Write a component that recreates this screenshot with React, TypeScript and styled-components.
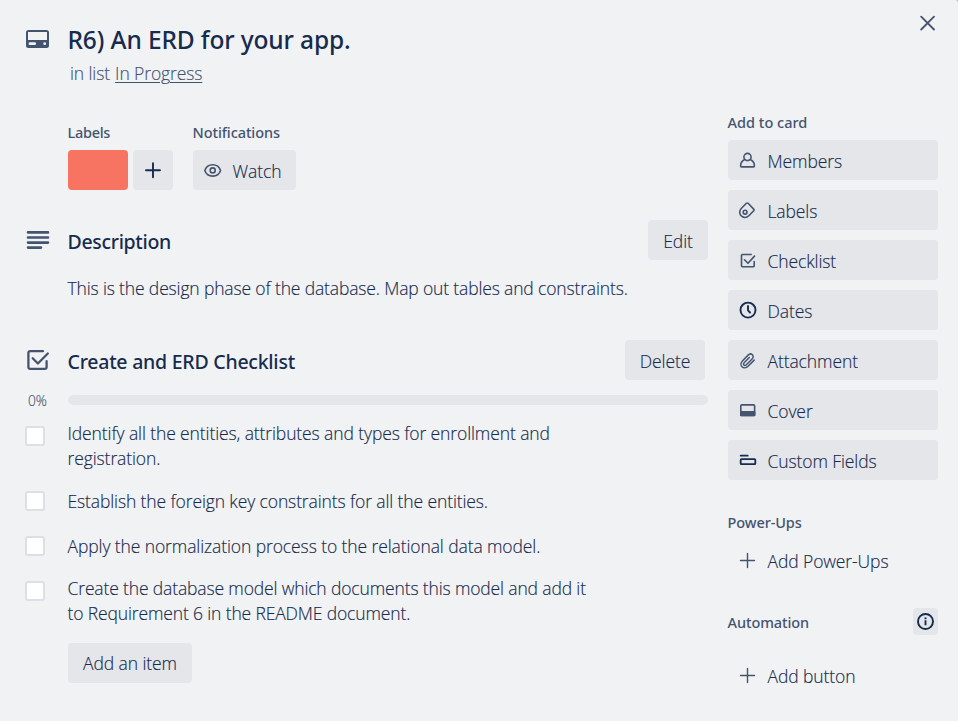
import React from "react";
import styled, { createGlobalStyle } from "styled-components";

const ink = "#172b4d";
const subtle = "#44546f";
const surface = "#f1f2f4";
const neutral = "#e4e6ea";

const GlobalStyle = createGlobalStyle`
  * { box-sizing: border-box; }
  body {
    margin: 0;
    background: #8d929b;
    color: ${ink};
    font: 300 17.5px/25px "Open Sans", "Noto Sans", sans-serif;
  }
  h2, h3, h4, p, ul { margin: 0; padding: 0; }
  svg { display: block; flex: none; fill: none; stroke: currentColor; }
`;

const Card = styled.main`
  width: 958px;
  height: 721px;
  overflow: hidden;
  background: ${surface};
  border-top-right-radius: 2px;
  -webkit-text-stroke: 0.15px;
`;

const Header = styled.header`
  display: flex;
  align-items: flex-start;
  height: 112px;
  padding: 0 22px 0 25px;
`;

const HeaderIcon = styled.div`
  width: 42.5px;
  padding-top: 29px;
  color: ${subtle};
`;

const HeaderText = styled.div`
  flex: 1;
  padding-top: 25px;
`;

const Title = styled.h2`
  font: 500 24.5px/30px "Noto Sans", sans-serif;
  letter-spacing: -0.13px;
  -webkit-text-stroke: 0;
`;

const ListLine = styled.p`
  padding: 6px 0 0 2.5px;
  color: ${subtle};
  letter-spacing: -0.11px;
`;

const ListLink = styled.a`
  margin-left: 0.7px;
  text-decoration: underline;
  text-underline-offset: 2px;
  text-decoration-thickness: 1px;
`;

const CloseButton = styled.button`
  padding: 15px 0 0;
  border: 0;
  background: none;
  color: ${subtle};
`;

const Columns = styled.div`
  display: flex;
  gap: 20px;
  padding: 0 20px 0 25px;
`;

const Main = styled.div`
  width: 683px;
`;

const Sidebar = styled.aside`
  width: 210px;
`;

const SmallHeading = styled.h4<{ $track?: number }>`
  font: 500 14.5px/20px "Noto Sans", sans-serif;
  letter-spacing: ${(p) => p.$track ?? -0.1}px;
  color: ${subtle};
  -webkit-text-stroke: 0;
  text-indent: -0.4px;
`;

const Details = styled.div`
  display: flex;
  gap: 20px;
  padding: 10px 0 0 43px;
`;

const DetailRow = styled.div`
  display: flex;
  gap: 5px;
  margin-top: 8px;
`;

const Swatch = styled.div`
  width: 60px;
  height: 40px;
  border-radius: 4px;
  background: #f87462;
`;

const Button = styled.button<{ $width?: number }>`
  display: flex;
  align-items: center;
  justify-content: center;
  width: ${(p) => (p.$width ? `${p.$width}px` : "auto")};
  height: 40px;
  padding: 0;
  border: 0;
  border-radius: 4px;
  background: ${neutral};
  color: ${ink};
  font: inherit;
  letter-spacing: -0.1px;
  -webkit-text-stroke: 0.15px;
`;

const WatchButton = styled(Button)`
  justify-content: flex-start;
  padding-left: 10px;
`;

const ButtonText = styled.span<{ $lift?: boolean }>`
  padding-top: ${(p) => (p.$lift ? 1 : 3)}px;
`;

const ButtonIcon = styled.span<{ $strong?: boolean }>`
  width: 29.5px;
  padding-top: 2px;
  color: ${(p) => (p.$strong ? ink : subtle)};
`;

const SectionHead = styled.div<{ $inset?: number }>`
  display: flex;
  align-items: flex-start;
  height: 40px;
  padding-right: ${(p) => p.$inset ?? 0}px;
`;

const SectionIcon = styled.div`
  width: 42.5px;
  padding-top: 8px;
  color: ${subtle};
`;

const SectionTitle = styled.h3<{ $track: number }>`
  flex: 1;
  padding-top: 2px;
  font: 500 19.5px/40px "Noto Sans", sans-serif;
  letter-spacing: ${(p) => p.$track}px;
  -webkit-text-stroke: 0;
`;

const Description = styled.section`
  margin-top: 30px;
`;

const DescriptionText = styled.p`
  padding: 16px 0 0 42.5px;
  letter-spacing: -0.15px;
`;

const Checklist = styled.section`
  margin-top: 39px;
`;

const Progress = styled.div`
  display: flex;
  align-items: center;
  height: 20px;
  margin-top: 10px;
`;

const Percent = styled.span`
  width: 43px;
  padding: 2px 0 0 3px;
  color: ${subtle};
  font-size: 13.75px;
  line-height: 20px;
`;

const ProgressTrack = styled.div`
  flex: 1;
  height: 10px;
  border-radius: 5px;
  background: ${neutral};
`;

const Items = styled.ul`
  margin-top: 11px;
  list-style: none;
`;

const Item = styled.li<{ $height: number }>`
  display: flex;
  align-items: flex-start;
  height: ${(p) => p.$height}px;
`;

const Checkbox = styled.span`
  width: 20px;
  height: 20px;
  margin: 5px 22.5px 0 0;
  border: 2px solid #dcdfe4;
  border-radius: 3px;
  background: #fff;
`;

const ItemText = styled.p<{ $single: boolean }>`
  padding-top: ${(p) => (p.$single ? 3 : 0)}px;
`;

const Line = styled.span<{ $track: number }>`
  display: block;
  white-space: nowrap;
  letter-spacing: ${(p) => p.$track}px;
`;

const AddItem = styled.div`
  padding-left: 43px;
`;

const ActionList = styled.div`
  display: flex;
  flex-direction: column;
  gap: 10px;
  margin: 8px 0 32px;
`;

const Action = styled(Button)<{ $plain?: boolean }>`
  width: 210px;
  justify-content: flex-start;
  padding-left: 10px;
  background: ${(p) => (p.$plain ? "transparent" : neutral)};
`;

const AutomationHead = styled.div`
  display: flex;
  align-items: center;
  justify-content: space-between;
  height: 27px;
  margin: -4px 0 20px;
`;

const InfoButton = styled(Button)`
  height: 27px;
`;

const icon = (w: number, h: number, body: React.ReactNode, sw = 1.6) => (
  <svg width={w} height={h} viewBox={`0 0 ${w} ${h}`} strokeWidth={sw} strokeLinecap="round" strokeLinejoin="round">
    {body}
  </svg>
);

const CardIcon = () =>
  icon(26, 20, <path fill="currentColor" stroke="none" fillRule="evenodd" d="M3.5 1h18A2.5 2.5 0 0 1 24 3.5v13a2.5 2.5 0 0 1-2.5 2.5h-18A2.5 2.5 0 0 1 1 16.500v-13A2.500 2.500 0 0 1 3.500 1ZM3 3v8h19V3ZM5 13.300a1.400 1.400 0 0 0 0 2.800h4.700a1.400 1.400 0 0 0 0-2.800ZM19.700 13.300a1.400 1.400 0 1 0 0 2.800a1.400 1.400 0 0 0 0-2.800Z" />);
const CloseIcon = () => icon(16, 16, <path d="M1.200 1.700l12.800 12.800M14 1.700l-12.800 12.800" />, 1.8);
const PlusIcon = () => icon(20, 20, <path d="M9.500 2.500v14M2.500 9.500h14" />, 1.4);
const AddLabelIcon = () => icon(20, 20, <path d="M10 3.300v14M3 10.300h14" />, 1.9);
const EyeIcon = () => icon(20, 20, <><path d="M1.800 9.400C3.200 5.400 6.200 3.700 9.700 3.700s6.500 1.700 7.900 5.700c-1.400 4-4.400 5.700-7.900 5.700s-6.500-1.700-7.900-5.700Z" /><circle cx="9.700" cy="9.400" r="2.500" /></>, 1.6);
const LinesIcon = () => icon(26, 24, <path d="M3 4.400h20M3 9.500h20M3 14.600h20M3 19.600h13" />, 2.6);
const CheckIcon = () => icon(26, 24, <path d="M18 3.200H5A1.600 1.600 0 0 0 3.400 4.800v14.400A1.600 1.600 0 0 0 5 20.800h15a1.600 1.600 0 0 0 1.600-1.600v-6M7.700 10.300l5.200 5.200L22.800 5.500" />, 2.3);
const MemberIcon = () => icon(20, 20, <><circle cx="9.500" cy="6" r="3.600" /><path d="M6.800 8.500C4.100 9.700 2.600 11.900 2.600 14.900c0 .7.400 1 1 1h11.800c.6 0 1-.3 1-1 0-3-1.500-5.200-4.200-6.400" /></>);
const TagIcon = () => icon(20, 20, <><path d="M8.400 2.300a1.200 1.200 0 0 1 1.700 0l5.600 5.800a1.200 1.200 0 0 1 0 1.700l-4.600 4.700c-2.200 2.200-5.200 2.500-7.500.7-2.400-2-2.500-5.400-.4-7.700Z" /><circle cx="7.100" cy="11.200" r="1.900" /></>);
const SmallCheckIcon = () => icon(20, 20, <path d="M13.200 3.500H4.500a1 1 0 0 0-1 1v10.300a1 1 0 0 0 1 1h10.700a1 1 0 0 0 1-1v-4.200M6.500 8.800l3.500 3.500 6.500-7.200" />);
const ClockIcon = () => icon(20, 20, <><circle cx="10" cy="9.100" r="7.500" /><path d="M10 5v4.300l2 2.200" /></>, 1.9);
const ClipIcon = () => icon(20, 20, <path d="M16.200 9.100L10 15.300c-1.900 1.800-4.500 1.900-6 .4s-1.300-4 .4-5.800l5.700-5.800c1.300-1.300 3.200-1.400 4.300-.3s1 2.900-.3 4.200l-5.800 5.800c-.8.800-1.800.8-2.400.2s-.5-1.500.2-2.200l5.200-5.300" />, 1.5);
const CoverIcon = () => icon(20, 20, <><rect x="2.800" y="3.900" width="13.800" height="10.500" rx="1" /><path d="M2.800 10.700h13.800v3.700H2.800Z" fill="currentColor" /></>);
const FieldsIcon = () => icon(20, 20, <><path d="M2.700 4.700h7" /><rect x="2.700" y="8.200" width="14.600" height="5" rx=".7" /></>, 1.8);
const InfoIcon = () => icon(20, 20, <><circle cx="9.500" cy="9.500" r="7.500" /><path d="M9.500 8.300v5" strokeLinecap="butt" /><path d="M9.500 5.400v1.800" strokeLinecap="butt" /></>, 1.9);

const actions: { name: string; Icon: () => React.ReactElement; strong?: boolean }[] = [
  { name: "Members", Icon: MemberIcon },
  { name: "Labels", Icon: TagIcon },
  { name: "Checklist", Icon: SmallCheckIcon },
  { name: "Dates", Icon: ClockIcon, strong: true },
  { name: "Attachment", Icon: ClipIcon },
  { name: "Cover", Icon: CoverIcon },
  { name: "Custom Fields", Icon: FieldsIcon, strong: true },
];

const items: { height: number; lines: [string, number][] }[] = [
  { height: 65, lines: [["Identify all the entities, attributes and types for enrollment and", -0.11], ["registration.", -0.1]] },
  { height: 45, lines: [["Establish the foreign key constraints for all the entities.", -0.12]] },
  { height: 45, lines: [["Apply the normalization process to the relational data model.", -0.1]] },
  { height: 67, lines: [["Create the database model which documents this model and add it", -0.145], ["to Requirement 6 in the README document.", -0.14]] },
];

export default function App() {
  return (
    <Card>
      <GlobalStyle />
      <Header>
        <HeaderIcon><CardIcon /></HeaderIcon>
        <HeaderText>
          <Title>R6) An ERD for your app.</Title>
          <ListLine>in list <ListLink>In Progress</ListLink></ListLine>
        </HeaderText>
        <CloseButton aria-label="Close"><CloseIcon /></CloseButton>
      </Header>
      <Columns>
        <Main>
          <Details>
            <div>
              <SmallHeading $track={-0.3}>Labels</SmallHeading>
              <DetailRow>
                <Swatch />
                <Button $width={40} aria-label="Add label"><AddLabelIcon /></Button>
              </DetailRow>
            </div>
            <div>
              <SmallHeading>Notifications</SmallHeading>
              <DetailRow>
                <WatchButton $width={103}>
                  <ButtonIcon><EyeIcon /></ButtonIcon>
                  <ButtonText>Watch</ButtonText>
                </WatchButton>
              </DetailRow>
            </div>
          </Details>
          <Description>
            <SectionHead>
              <SectionIcon><LinesIcon /></SectionIcon>
              <SectionTitle $track={-0.32}>Description</SectionTitle>
              <Button $width={60}><ButtonText>Edit</ButtonText></Button>
            </SectionHead>
            <DescriptionText>This is the design phase of the database. Map out tables and constraints.</DescriptionText>
          </Description>
          <Checklist>
            <SectionHead $inset={3}>
              <SectionIcon><CheckIcon /></SectionIcon>
              <SectionTitle $track={-0.24}>Create and ERD Checklist</SectionTitle>
              <Button $width={80}><ButtonText>Delete</ButtonText></Button>
            </SectionHead>
            <Progress>
              <Percent>0%</Percent>
              <ProgressTrack />
            </Progress>
            <Items>
              {items.map((item) => (
                <Item key={item.lines[0][0]} $height={item.height}>
                  <Checkbox />
                  <ItemText $single={item.lines.length === 1}>
                    {item.lines.map(([text, track]) => <Line key={text} $track={track}>{text}</Line>)}
                  </ItemText>
                </Item>
              ))}
            </Items>
            <AddItem><Button $width={124}><ButtonText $lift>Add an item</ButtonText></Button></AddItem>
          </Checklist>
        </Main>
        <Sidebar>
          <SmallHeading $track={0}>Add to card</SmallHeading>
          <ActionList>
            {actions.map(({ name, Icon, strong }) => (
              <Action key={name}>
                <ButtonIcon $strong={strong}><Icon /></ButtonIcon>
                <ButtonText>{name}</ButtonText>
              </Action>
            ))}
          </ActionList>
          <SmallHeading>Power-Ups</SmallHeading>
          <ActionList>
            <Action $plain>
              <ButtonIcon><PlusIcon /></ButtonIcon>
              <ButtonText>Add Power-Ups</ButtonText>
            </Action>
          </ActionList>
          <AutomationHead>
            <SmallHeading>Automation</SmallHeading>
            <InfoButton $width={25} aria-label="About automation"><InfoIcon /></InfoButton>
          </AutomationHead>
          <Action $plain>
            <ButtonIcon><PlusIcon /></ButtonIcon>
            <ButtonText>Add button</ButtonText>
          </Action>
        </Sidebar>
      </Columns>
    </Card>
  );
}
